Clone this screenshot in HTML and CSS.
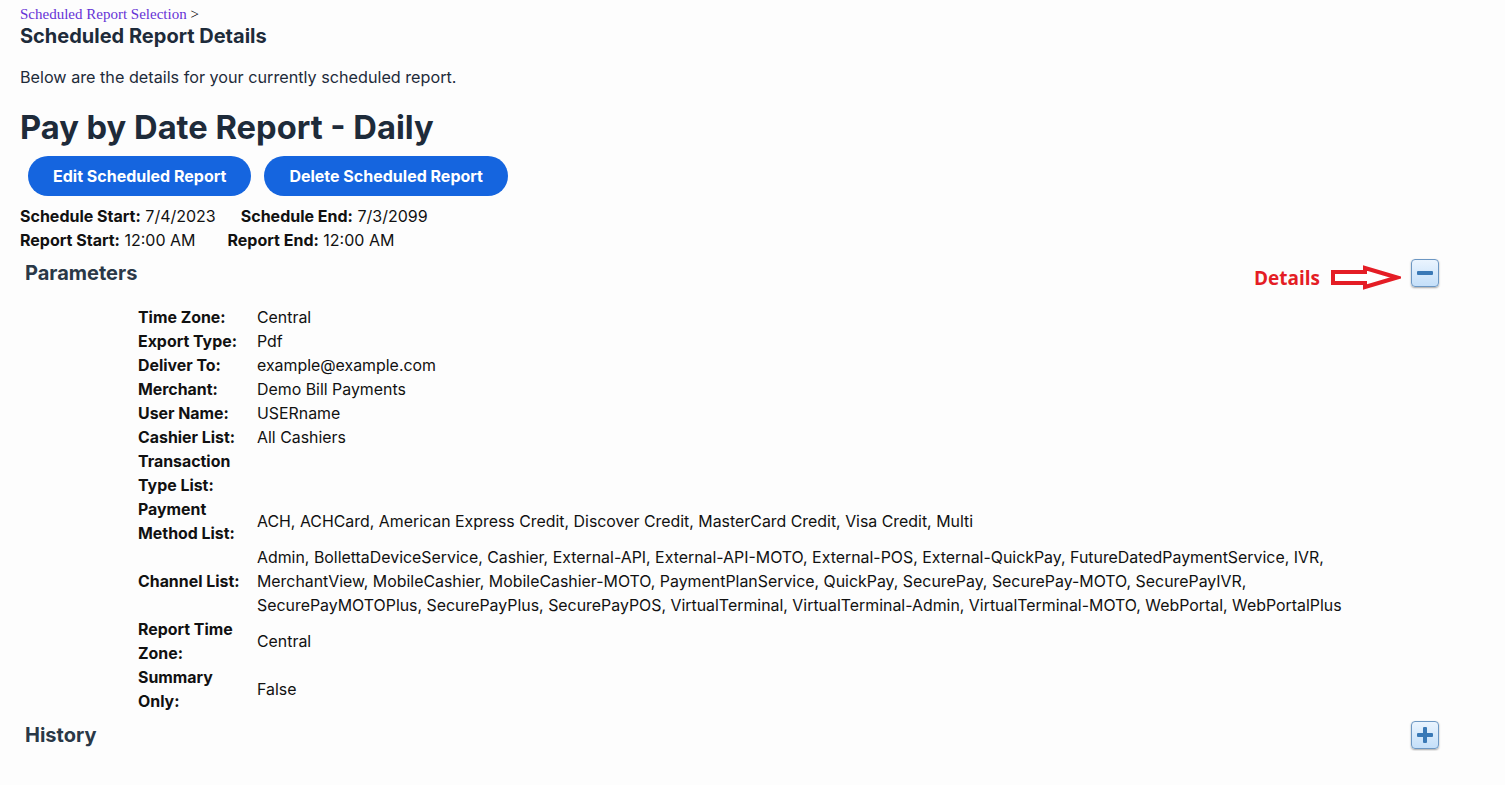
FILE: index.html
```html
<!DOCTYPE html>
<html lang="en">
  <head>
    <meta charset="UTF-8" />
    <meta name="viewport" content="width=device-width, initial-scale=1.0" />
    <title>Scheduled Report Details</title>
    <link rel="stylesheet" href="styles.css">
  </head>

  <body>
    <div class="side">
      <div class="brod">
        <a href="#">Scheduled Report Selection</a> &gt;
      </div>
      <h2 class="sidetitel">Scheduled Report Details</h2>
      <p class="intro">Below are the details for your currently scheduled report.</p>

      <h1>Pay by Date Report - Daily</h1>

      <div class="knapper">
        <button>Edit Scheduled Report</button>
        <button>Delete Scheduled Report</button>
      </div>

      <div class="tider">
        <div><b>Schedule Start:</b> 7/4/2023<span class="mellem"></span><b>Schedule End:</b> 7/3/2099</div>
        <div><b>Report Start:</b> 12:00 AM<span class="mellem bred"></span><b>Report End:</b> 12:00 AM</div>
      </div>
    </div>

    <section class="sektion">
      <div class="sektion-top">
        <h3>Parameters</h3>
        <div class="hoejre">
          <span class="note">Details</span>
          <svg class="pil" width="72" height="26" viewBox="0 0 72 26">
            <polygon points="4,8 36,8 36,4 68,13.5 36,23 36,19 4,19" fill="#fff" stroke="#e41d25" stroke-width="4" stroke-linejoin="miter"/>
          </svg>
          <button class="toggle"><span class="streg"></span></button>
        </div>
      </div>

      <table class="param">
        <tr><td class="label">Time Zone:</td><td>Central</td></tr>
        <tr><td class="label">Export Type:</td><td>Pdf</td></tr>
        <tr><td class="label">Deliver To:</td><td>example@example.com</td></tr>
        <tr><td class="label">Merchant:</td><td>Demo Bill Payments</td></tr>
        <tr><td class="label">User Name:</td><td>USERname</td></tr>
        <tr><td class="label">Cashier List:</td><td>All Cashiers</td></tr>
        <tr><td class="label">Transaction Type List:</td><td></td></tr>
        <tr><td class="label">Payment Method List:</td><td>ACH, ACHCard, American Express Credit, Discover Credit, MasterCard Credit, Visa Credit, Multi</td></tr>
        <tr><td class="label">Channel List:</td><td>Admin, BollettaDeviceService, Cashier, External-API, External-API-MOTO, External-POS, External-QuickPay, FutureDatedPaymentService, IVR, MerchantView, MobileCashier, MobileCashier-MOTO, PaymentPlanService, QuickPay, SecurePay, SecurePay-MOTO, SecurePayIVR, SecurePayMOTOPlus, SecurePayPlus, SecurePayPOS, VirtualTerminal, VirtualTerminal-Admin, VirtualTerminal-MOTO, WebPortal, WebPortalPlus</td></tr>
        <tr><td class="label">Report Time Zone:</td><td>Central</td></tr>
        <tr><td class="label">Summary Only:</td><td>False</td></tr>
      </table>
    </section>

    <section class="sektion">
      <div class="sektion-top">
        <h3>History</h3>
        <button class="toggle"><span class="streg"></span><span class="streg lodret"></span></button>
      </div>
    </section>
  </body>
</html>
```

FILE: styles.css
```css
body {
  margin: 0;
  background-color: #fdfdfd;
  font-family: Inter, "Noto Sans", sans-serif;
  color: #1e2b3a;
}
.side {
  padding: 6px 20px 0 20px;
}
.brod {
  font-family: "Liberation Serif", serif;
  font-size: 15px;
  line-height: 17px;
  color: #000;
}
.brod a {
  color: #6633d6;
  text-decoration: none;
}
.sidetitel {
  margin: 1px 0 0 0;
  font-size: 20px;
  line-height: 24px;
  font-weight: 700;
}
.intro {
  margin: 19px 0 0 0;
  font-size: 16.2px;
  line-height: 20px;
}
h1 {
  margin: 20px 0 0 0;
  font-size: 32.7px;
  line-height: 40px;
  font-weight: 700;
}
.knapper {
  display: flex;
  gap: 13px;
  margin: 9px 0 0 8px;
}
.knapper button {
  height: 40px;
  padding: 0 25px;
  border: none;
  border-radius: 20px;
  background-color: #1565df;
  color: #fff;
  font-family: Inter, sans-serif;
  font-size: 16px;
  font-weight: 700;
}
.tider {
  margin-top: 8px;
  font-size: 16px;
  line-height: 24px;
  color: #111;
}
.tider b {
  font-weight: 700;
}
.mellem {
  display: inline-block;
  width: 25px;
}
.mellem.bred {
  width: 32px;
}
.sektion {
  padding: 0 66px 0 25px;
}
.sektion-top {
  display: flex;
  justify-content: space-between;
  align-items: center;
  height: 32px;
  margin-top: 5px;
}
.sektion-top h3 {
  margin: 0;
  font-size: 20px;
  font-weight: 700;
  color: #2a3847;
}
.hoejre {
  display: flex;
  align-items: center;
}
.note {
  font-family: "Open Sans", sans-serif;
  font-weight: 700;
  font-size: 19px;
  color: #e41d25;
  margin: 10px 9px 0 0;
}
.pil {
  margin: 7px 10px 0 0;
}
.toggle {
  position: relative;
  width: 28px;
  height: 28px;
  padding: 0;
  border: 1px solid #6c97c3;
  border-radius: 4px;
  background: linear-gradient(#eaf4fe, #c4dff9);
  box-shadow: 0 1px 2px rgba(0, 0, 0, 0.35);
}
.streg {
  position: absolute;
  left: 5px;
  top: 11px;
  width: 16px;
  height: 4px;
  background-color: #3a79b6;
  border-radius: 1px;
}
.streg.lodret {
  left: 11px;
  top: 5px;
  width: 4px;
  height: 16px;
}
.param {
  border-spacing: 0;
  margin: 17px 0 0 113px;
  width: 1240px;
  font-size: 15.9px;
  line-height: 24px;
  color: #111;
}
.param td {
  padding: 0;
  vertical-align: middle;
}
.param .label {
  width: 112px;
  padding-right: 7px;
  font-weight: 700;
}
```
